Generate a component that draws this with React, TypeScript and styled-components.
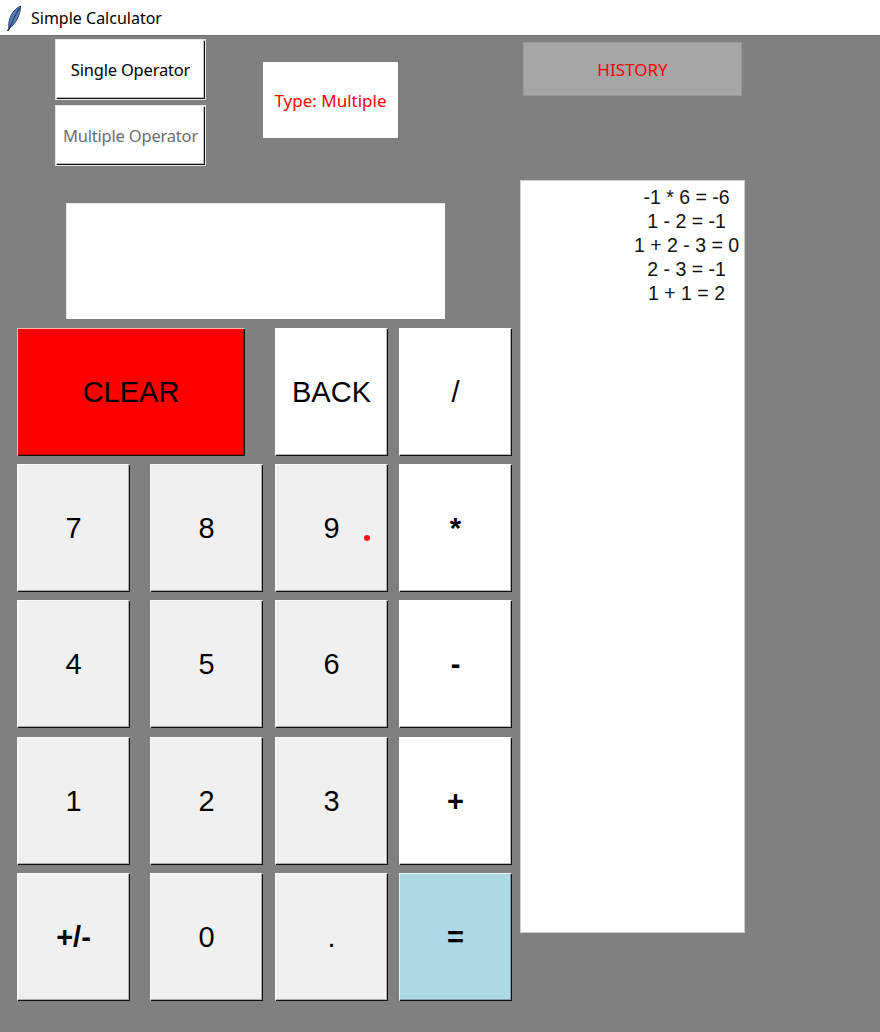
import styled, { createGlobalStyle } from "styled-components";

const GlobalStyle = createGlobalStyle`
  html, body {
    margin: 0;
    padding: 0;
    background: #808080;
  }
  * {
    box-sizing: border-box;
  }
`;

const history = ["-1 * 6 = -6", "1 - 2 = -1", "1 + 2 - 3 = 0", "2 - 3 = -1", "1 + 1 = 2"];

type KeyKind = "digit" | "op" | "clear" | "equals";

const keys: { label: string; kind: KeyKind; wide?: boolean; bold?: boolean; dot?: boolean }[] = [
  { label: "CLEAR", kind: "clear", wide: true },
  { label: "BACK", kind: "op" },
  { label: "/", kind: "op" },
  { label: "7", kind: "digit" },
  { label: "8", kind: "digit" },
  { label: "9", kind: "digit", dot: true },
  { label: "*", kind: "op", bold: true },
  { label: "4", kind: "digit" },
  { label: "5", kind: "digit" },
  { label: "6", kind: "digit" },
  { label: "-", kind: "op", bold: true },
  { label: "1", kind: "digit" },
  { label: "2", kind: "digit" },
  { label: "3", kind: "digit" },
  { label: "+", kind: "op", bold: true },
  { label: "+/-", kind: "digit", bold: true },
  { label: "0", kind: "digit" },
  { label: ".", kind: "digit" },
  { label: "=", kind: "equals", bold: true },
];

const keyColours: Record<KeyKind, string> = {
  digit: "#f0f0f0",
  op: "#ffffff",
  clear: "#ff0000",
  equals: "#add8e6",
};

const App = () => {
  return (
    <>
      <GlobalStyle />
      <Window>
        <TitleBar>
          <FeatherIcon />
          <TitleText>Simple Calculator</TitleText>
        </TitleBar>
        <Main>
          <LeftPanel>
            <TopRow>
              <ModeColumn>
                <ModeButton>Single Operator</ModeButton>
                <ModeButton $muted>Multiple Operator</ModeButton>
              </ModeColumn>
              <TypeLabel>Type: Multiple</TypeLabel>
            </TopRow>
            <Display />
            <Keypad>
              {keys.map((k) => (
                <Key
                  key={k.label}
                  $bg={keyColours[k.kind]}
                  $wide={k.wide}
                  $bold={k.bold}
                >
                  {k.label}
                  {k.dot && <Dot />}
                </Key>
              ))}
            </Keypad>
          </LeftPanel>
          <RightPanel>
            <HistoryButton>HISTORY</HistoryButton>
            <HistoryList>
              {history.map((line) => (
                <HistoryLine key={line}>{line}</HistoryLine>
              ))}
            </HistoryList>
          </RightPanel>
        </Main>
      </Window>
    </>
  );
};

export default App;

const FeatherIcon = () => (
  <svg width="16" height="26" viewBox="0 0 16 26">
    <path d="M3 24 C1.5 15, 6 5, 14.5 1 C14.5 10, 9.5 19, 3 24 Z" fill="#5a7fb8" stroke="#26406e" strokeWidth="1" />
    <path d="M3 24 C6 17, 9 10, 13.5 3" fill="none" stroke="#0f2550" strokeWidth="1" />
    <path d="M3 24 L1.5 26" stroke="#222" strokeWidth="1.4" />
  </svg>
);

const Window = styled.div`
  width: 880px;
  height: 1032px;
  display: flex;
  flex-direction: column;
  overflow: hidden;
`;

const TitleBar = styled.div`
  height: 35px;
  background: #ffffff;
  display: flex;
  align-items: center;
  padding-left: 6px;
  gap: 9px;
`;

const TitleText = styled.span`
  font-family: "Noto Sans", "Open Sans", sans-serif;
  font-size: 16px;
  color: #000;
`;

const Main = styled.div`
  flex: 1;
  display: flex;
  background: #808080;
  border-top: 1px solid #6f6f6f;
`;

const LeftPanel = styled.div`
  width: 520px;
  display: flex;
  flex-direction: column;
`;

const TopRow = styled.div`
  display: flex;
  align-items: flex-start;
  padding: 3px 0 0 55px;
`;

const ModeColumn = styled.div`
  display: flex;
  flex-direction: column;
  gap: 5px;
`;

const raised = `
  box-shadow:
    inset 1px 1px 0 rgba(255, 255, 255, 0.7),
    inset -1px -1px 0 #101010,
    inset -2px -2px 0 rgba(0, 0, 0, 0.28);
`;

const ModeButton = styled.div<{ $muted?: boolean }>`
  width: 151px;
  height: 61px;
  background: #ffffff;
  display: flex;
  align-items: center;
  justify-content: center;
  font-family: "Noto Sans", "Open Sans", sans-serif;
  font-size: 16.5px;
  letter-spacing: -0.2px;
  white-space: nowrap;
  color: ${(p) => (p.$muted ? "#6d6d6d" : "#000")};
  border: 1px solid #e6e6e6;
  ${raised}
`;

const TypeLabel = styled.div`
  margin: 23px 0 0 57px;
  width: 135px;
  height: 76px;
  background: #ffffff;
  display: flex;
  align-items: center;
  justify-content: center;
  font-family: "Noto Sans", "Open Sans", sans-serif;
  font-size: 17px;
  color: #ff0000;
`;

const Display = styled.div`
  margin: 37px 0 0 66px;
  width: 379px;
  height: 116px;
  background: #ffffff;
  border-top: 1px solid #e3e3e3;
  border-left: 1px solid #e3e3e3;
`;

const Keypad = styled.div`
  margin: 9px 0 0 17px;
  display: grid;
  grid-template-columns: 133px 125px 124px 113px;
  grid-template-rows: 128px 128px 128px 129px 128px;
  row-gap: 8px;
`;

const Key = styled.div<{ $bg: string; $wide?: boolean; $bold?: boolean }>`
  position: relative;
  grid-column: ${(p) => (p.$wide ? "span 2" : "auto")};
  width: ${(p) => (p.$wide ? "228px" : "113px")};
  height: 128px;
  align-self: end;
  background: ${(p) => p.$bg};
  display: flex;
  align-items: center;
  justify-content: center;
  font-family: "Liberation Sans", Arial, sans-serif;
  font-size: 29px;
  font-weight: ${(p) => (p.$bold ? 700 : 400)};
  color: #000;
  ${raised}
`;

const Dot = styled.span`
  position: absolute;
  left: 89px;
  top: 71px;
  width: 6px;
  height: 6px;
  border-radius: 50%;
  background: #ff1010;
`;

const RightPanel = styled.div`
  display: flex;
  flex-direction: column;
  padding-top: 6px;
`;

const HistoryButton = styled.div`
  margin-left: 3px;
  width: 219px;
  height: 54px;
  background: #a6a6a6;
  border: 1px solid #999999;
  display: flex;
  align-items: center;
  justify-content: center;
  font-family: "Noto Sans", "Open Sans", sans-serif;
  font-size: 17px;
  color: #ff0000;
`;

const HistoryList = styled.div`
  margin-top: 84px;
  width: 225px;
  height: 753px;
  background: #ffffff;
  border: 1px solid #d0d0d0;
  padding: 4px 0 0 108px;
  display: flex;
  flex-direction: column;
`;

const HistoryLine = styled.div`
  font-family: "Liberation Sans", Arial, sans-serif;
  font-size: 19.5px;
  line-height: 24px;
  text-align: center;
  color: #111;
`;
